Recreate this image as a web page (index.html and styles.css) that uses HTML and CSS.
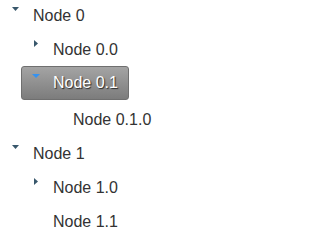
FILE: index.html
```html
<!DOCTYPE html>
<html>
<head>
<meta charset="utf-8">
<link rel="stylesheet" href="styles.css">
</head>
<body>
<ul class="tree">
  <li>
    <div class="node">
      <span class="toggle"><svg width="20" height="20" viewBox="0 0 20 20"><polygon class="arrow" points="6,1 13,1 9.5,5"/></svg></span>
      <span class="label">Node 0</span>
    </div>
    <ul class="children">
      <li>
        <div class="node">
          <span class="toggle"><svg width="20" height="20" viewBox="0 0 20 20"><polygon class="arrow" points="8,0 12,3.5 8,7"/></svg></span>
          <span class="label">Node 0.0</span>
        </div>
      </li>
      <li>
        <div class="node selected">
          <span class="toggle"><svg width="20" height="20" viewBox="0 0 20 20"><polygon class="arrow sel" points="6,1 14,1 10,5"/></svg></span>
          <span class="label">Node 0.1</span>
        </div>
        <ul class="children">
          <li>
            <div class="node">
              <span class="toggle"></span>
              <span class="label">Node 0.1.0</span>
            </div>
          </li>
        </ul>
      </li>
    </ul>
  </li>
  <li>
    <div class="node">
      <span class="toggle"><svg width="20" height="20" viewBox="0 0 20 20"><polygon class="arrow" points="6,1 13,1 9.5,5"/></svg></span>
      <span class="label">Node 1</span>
    </div>
    <ul class="children">
      <li>
        <div class="node">
          <span class="toggle"><svg width="20" height="20" viewBox="0 0 20 20"><polygon class="arrow" points="8,0 12,3.5 8,7"/></svg></span>
          <span class="label">Node 1.0</span>
        </div>
      </li>
      <li>
        <div class="node">
          <span class="toggle"></span>
          <span class="label">Node 1.1</span>
        </div>
      </li>
    </ul>
  </li>
</ul>
</body>
</html>
```

FILE: styles.css
```css
html, body {
  margin: 0;
  padding: 0;
  background: #ffffff;
}

body {
  font-family: "Liberation Sans", Arial, sans-serif;
  font-size: 16px;
  color: #333333;
}

.tree {
  list-style: none;
  margin: 0;
  padding: 0 0 0 6px;
}

.children {
  list-style: none;
  margin: 0;
  padding: 0 0 0 20px;
}

.node {
  display: flex;
  align-items: flex-start;
  width: fit-content;
  padding: 6px 4px 8px 0;
  line-height: 20px;
  white-space: nowrap;
}

.toggle {
  display: block;
  width: 20px;
  height: 20px;
  flex: none;
}

.toggle svg {
  display: block;
}

.arrow {
  fill: #38576b;
}

.arrow.sel {
  fill: #3592f0;
}

.label {
  padding-left: 7px;
}

.node.selected {
  margin: -2px 0 4px -5px;
  padding: 6px 10px 6px 4px;
  border: 1px solid #6f6f6f;
  border-radius: 3px;
  background: linear-gradient(to bottom, #a4a4a4, #7c7c7c);
  color: #ffffff;
  text-shadow: 1px 1px 1px #2a2a2a;
}
```
